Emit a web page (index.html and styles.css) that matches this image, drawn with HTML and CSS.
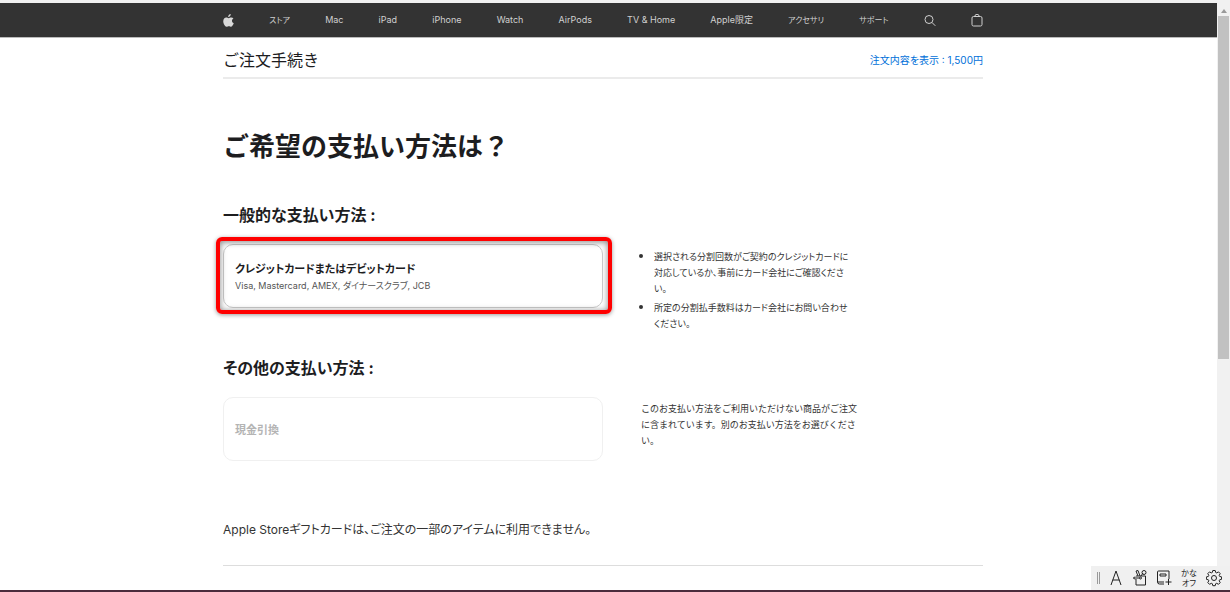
FILE: index.html
```html
<!DOCTYPE html>
<html lang="ja">
<head>
<meta charset="utf-8">
<meta name="viewport" content="width=device-width, initial-scale=1">
<title>ご注文手続き</title>
<link rel="stylesheet" href="styles.css">
</head>
<body>
<div class="window">
  <div class="page">
    <header class="globalnav">
      <nav class="nav-list wrap" aria-label="グローバル">
        <a href="#" aria-label="Apple"><svg class="logo" viewBox="0 0 22 26"><path d="M15.4 0c.2 1.600-.4 3.100-1.300 4.200-.9 1.200-2.400 2-3.800 1.900-.2-1.500.5-3.100 1.400-4.100C12.600.9 14.200.1 15.400 0zM20.900 8.900c-2 1.200-3 2.700-3 4.700 0 2.300 1.300 4.200 3.600 5.100-.8 2.500-2.800 6.500-5.200 6.600-1.600 0-2.300-1-4.500-1s-3 1-4.500 1C4 25.400.5 19.400.5 14.500c0-4.600 2.800-7.500 6-7.500 1.900 0 3.500 1.300 4.800 1.300 1.200 0 3.100-1.400 5.300-1.300 1.700 0 3.300.6 4.300 1.900z"/></svg></a>
        <a href="#" class="ja">ストア</a>
        <a href="#">Mac</a>
        <a href="#">iPad</a>
        <a href="#">iPhone</a>
        <a href="#">Watch</a>
        <a href="#">AirPods</a>
        <a href="#">TV &amp; Home</a>
        <a href="#">Apple限定</a>
        <a href="#" class="ja">アクセサリ</a>
        <a href="#" class="ja">サポート</a>
        <a href="#" aria-label="検索"><svg class="tool" viewBox="0 0 12 13"><circle cx="5" cy="5.500" r="4"/><path d="M8 8.500l3.300 3.300"/></svg></a>
        <a href="#" aria-label="ショッピングバッグ"><svg class="tool" viewBox="0 0 12 13"><rect x="1" y="2.500" width="10" height="9.500" rx="1.500"/><path d="M3.800 2.500a2.200 2.200 0 0 1 4.400 0"/></svg></a>
      </nav>
    </header>
    <main class="wrap">
      <div class="subhead">
        <p class="subhead-title">ご注文手続き</p>
        <a class="summary" href="#">注文内容を表示 : 1,500円</a>
      </div>
      <h1>ご希望の支払い方法は？</h1>
      <section>
        <h2>一般的な支払い方法 :</h2>
        <div class="row">
          <div class="choice">
            <button class="card" type="button">
              <span class="card-title">クレジットカードまたはデビットカード</span>
              <span class="card-note">Visa, Mastercard, AMEX, ダイナースクラブ, JCB</span>
            </button>
            <div class="highlight"></div>
          </div>
          <ul class="info">
            <li>選択される分割回数がご契約のクレジットカードに対応しているか、事前にカード会社にご確認ください。</li>
            <li>所定の分割払手数料はカード会社にお問い合わせください。</li>
          </ul>
        </div>
      </section>
      <section>
        <h2>その他の支払い方法 :</h2>
        <div class="row">
          <div class="choice">
            <button class="card" type="button" disabled>
              <span class="card-title">現金引換</span>
            </button>
          </div>
          <p class="info">このお支払い方法をご利用いただけない商品がご注文に含まれています。別のお支払い方法をお選びください。</p>
        </div>
      </section>
      <p class="giftcard">Apple Storeギフトカードは、ご注文の一部のアイテムに利用できません。</p>
    </main>
  </div>
  <div class="scrollbar">
    <svg class="arrow" viewBox="0 0 6 4"><path d="M0 4l3-4 3 4z"/></svg>
    <div class="thumb"></div>
  </div>
  <div class="ime">
    <span class="grip"></span>
    <button type="button" aria-label="入力モード"><svg viewBox="0 0 16 18"><path d="M3 16L8 2l5 14M4.700 11h6.600"/></svg></button>
    <button type="button" aria-label="IMEパッド"><svg viewBox="0 0 16 18"><path d="M4 10v6h9.500V7H4M6 7L4 2l2-.5L8 7M9 7l2-3M1.500 9h6M1.500 9L3 7.500M1.500 9L3 10.500"/><circle cx="12" cy="3.500" r="2"/><circle cx="8.500" cy="9" r="1"/></svg></button>
    <button type="button" aria-label="単語の追加"><svg viewBox="0 0 16 18"><path d="M8 15H3.500a2 2 0 0 1-2-2V3a1 1 0 0 1 1-1H13v8M2 13h6M4 5h6v2H4zM12.500 10v6M9.500 13h6"/></svg></button>
    <button type="button" class="kana">かな<br>オフ</button>
    <button type="button" aria-label="設定"><svg viewBox="0 0 16 18"><circle cx="8" cy="9" r="2.500"/><path d="M6.800 1.500h2.400l.5 2 1 .4 1.800-1 1.700 1.700-1 1.800.4 1 2 .5v2.400l-2 .5-.4 1 1 1.800-1.700 1.700-1.800-1-1 .4-.5 2H6.800l-.5-2-1-.4-1.800 1-1.700-1.700 1-1.800-.4-1-2-.5V7.900l2-.5.4-1-1-1.800 1.700-1.700 1.800 1 1-.4z"/></svg></button>
  </div>
</div>
</body>
</html>
```
FILE: styles.css
```css
* { box-sizing: border-box; }
body {
  margin: 0;
  background: #fff;
  color: #1d1d1f;
  font-family: Inter, "Noto Sans CJK JP", sans-serif;
  font-feature-settings: "palt";
}
h1, h2, p, ul { margin: 0; }
a { text-decoration: none; }
button {
  margin: 0;
  padding: 0;
  border: 0;
  background: none;
  color: inherit;
  font: inherit;
  font-feature-settings: inherit;
}
svg { display: block; fill: none; stroke: currentColor; }

.window {
  position: relative;
  display: flex;
  height: 100vh;
  overflow: hidden;
  border-top: 3px solid #f1f1f1;
  border-bottom: 2px solid #4b2c3c;
}
.page { --gutter: 11px; flex: 1; min-width: 0; }
.wrap { max-width: 760px; margin: 0 auto; }

.globalnav {
  padding-right: var(--gutter);
  background: #333;
  border-bottom: 1px solid #bbb;
}
.page > main { max-width: 771px; padding-right: var(--gutter); }
.nav-list {
  display: flex;
  align-items: center;
  justify-content: space-between;
  height: 34px;
}
.nav-list a { color: #d0d0d0; font-size: 9px; line-height: 12px; }
.nav-list .ja { font-size: 8px; }
.logo { width: 11px; height: 13px; fill: #d8d8d8; stroke: none; }
.tool { width: 12px; height: 13px; }

.subhead {
  display: flex;
  align-items: center;
  justify-content: space-between;
  height: 41px;
  padding-top: 5px;
  border-bottom: 2px solid #ebebeb;
}
.subhead-title { font-size: 16px; line-height: 24px; font-feature-settings: normal; }
.summary { color: #0070d9; font-size: 10px; line-height: 16px; }

h1 {
  margin: 48px 0 12px;
  font-size: 26px;
  line-height: 40px;
  font-weight: 700;
  font-feature-settings: normal;
}
h2 { padding-top: 24px; font-size: 16px; line-height: 24px; font-weight: 700; }
.row {
  display: grid;
  grid-template-columns: 1fr 1fr;
  align-items: start;
  min-height: 88px;
  margin-top: 17px;
}
.choice { position: relative; }
.card {
  display: flex;
  flex-direction: column;
  justify-content: center;
  gap: 2px;
  width: 100%;
  height: 64px;
  padding: 2px 11px 0;
  border: 1px solid #ccc;
  border-radius: 10px;
  text-align: left;
}
.card:disabled { border-color: #f0f0f0; color: #b4b4b4; }
.card-title { font-size: 11px; line-height: 16px; font-weight: 700; }
.card-note { color: #555; font-size: 9px; line-height: 14px; }
.highlight {
  position: absolute;
  inset: -7px -9px -6px -7px;
  border: 4px solid #f00;
  border-radius: 6px;
  box-shadow: 0 1px 4px rgba(0, 0, 0, .4), inset 0 1px 6px rgba(0, 0, 0, .5);
  pointer-events: none;
}
.info {
  padding: 4px 122px 0 38px;
  color: #333;
  font-size: 9px;
  line-height: 16px;
  font-feature-settings: normal;
}
ul.info { padding-left: 51px; padding-right: 131px; font-feature-settings: "palt"; }
.info li::marker { font-size: 12px; }
.info li + li { margin-top: 2px; }
.giftcard {
  padding: 33px 0 23px;
  border-bottom: 1px solid #ddd;
  color: #333;
  font-size: 12px;
  line-height: 24px;
}

.scrollbar {
  flex: none;
  width: 13px;
  padding: 6px 1px;
  background: #f1f1f1;
}
.arrow { width: 6px; height: 4px; margin: 0 auto 3px; fill: #999; stroke: none; }
.thumb { height: 343px; background: #c1c1c1; }

.ime {
  position: absolute;
  right: 0;
  bottom: 0;
  display: flex;
  align-items: center;
  gap: 8px;
  height: 24px;
  padding: 0 8px 0 6px;
  background: #f0f0f0;
  color: #222;
}
.ime svg { width: 16px; height: 18px; }
.grip { width: 3px; height: 12px; border: solid #999; border-width: 0 1px; }
.kana { width: 18px; font-size: 8px; line-height: 10px; }
```
